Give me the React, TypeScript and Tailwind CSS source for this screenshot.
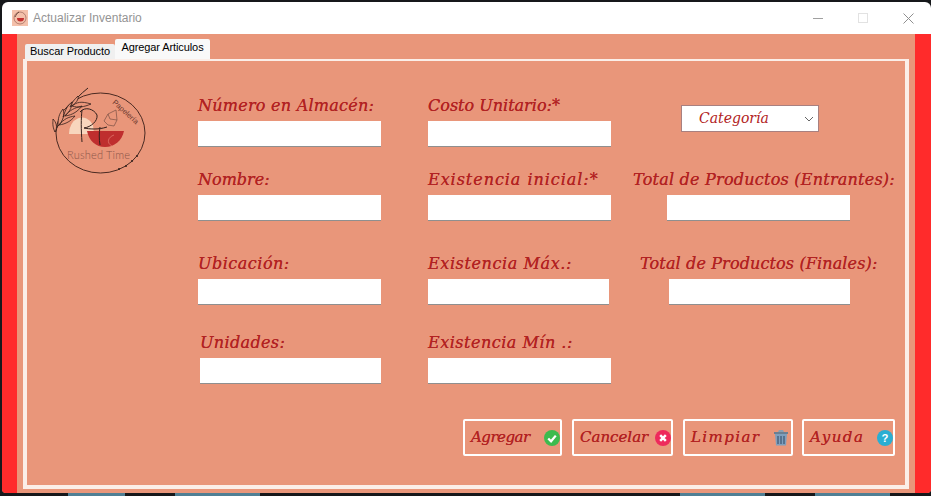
import { ReactNode } from "react";

const script = "font-['DejaVu_Serif',serif] italic text-[#b22222] [text-shadow:0_0_0.6px_#b22222]";

function Logo() {
  return (
    <svg width="100" height="92" viewBox="0 0 100 92" fill="none" className="ml-[23px] mt-[-11px]">
      <ellipse cx="50.500" cy="48" rx="44.500" ry="40" stroke="#4a2a22" strokeWidth="1" />
      <path d="M19 49a13 16 0 0 1 24-9l1 9z" fill="#f8d6bd" />
      <path d="M37 46h37c-2 10-10 16-19 16s-16-6-18-16z" fill="#bf2e2e" />
      <path d="M62 61c-6-3-4-9 2-11" stroke="#e0736a" strokeWidth="0.8" />
      <path d="M32 57c-1-12-1-24 0-32M30 27c5-6 14-3 17 3 1 6-6 12-13 13 5 1 14 2 23-1M50 42c-1 6-1 12 0 18" stroke="#33201c" strokeWidth="1" />
      <path d="M5 47c8-18 18-32 33-44" stroke="#33201c" strokeWidth="1" />
      <path d="M5 47c-3-6-2-10-2-13 3 3 5 8 2 13zM8 41c0-8 1-12 5-17 2 6 0 12-5 17zM13 32c3-8 4-11 9-15 0 6-3 11-9 15zM20 22c2-5 4-7 8-11 1 3-2 8-8 11zM9 40c5-6 9-8 16-9-4 5-9 8-16 9zM15 31c5-6 9-8 17-10-4 5-9 9-17 10zM22 21c5-4 9-5 19-2-7 3-13 4-19 2z" stroke="#33201c" strokeWidth="0.8" fill="#e9967a" />
      <path d="M54 36l4-7 8-4 1 10-3 6-6-1zM58 29l2 5 7 1" stroke="#7a5045" strokeWidth="0.7" />
      <text x="62" y="18" fontSize="7.500" fill="#6f3b30" fontFamily="Liberation Sans, sans-serif" transform="rotate(42 62 18)">Papelería</text>
      <text x="17" y="74" fontSize="11" fill="#8a5549" fontFamily="Lato, sans-serif" fontWeight="300" letterSpacing="0.2">Rushed Time</text>
      <circle cx="87" cy="71" r="1" fill="#33201c" />
      <circle cx="82" cy="76" r="1" fill="#33201c" />
      <circle cx="76" cy="81" r="1" fill="#33201c" />
      <circle cx="69" cy="84" r="1" fill="#33201c" />
    </svg>
  );
}

function Field({ label, className = "", inputClass = "w-[183px]", labelClass = "" }: { label: string; className?: string; inputClass?: string; labelClass?: string }) {
  return (
    <div className={`flex flex-col ${className}`}>
      <label className={`${script} h-[25px] text-[16px] leading-[20px] whitespace-nowrap ${labelClass}`}>{label}</label>
      <input className={`h-[26px] bg-white border-b border-[#8f8f8f] outline-none ${inputClass}`} />
    </div>
  );
}

function ActionButton({ label, icon, className, textClass }: { label: string; icon: ReactNode; className: string; textClass: string }) {
  return (
    <button className={`h-[37px] flex items-center justify-between border-2 border-white rounded-[2px] pl-[6px] ${className}`}>
      <span className={`${script} text-[15px] ${textClass}`}>{label}</span>
      {icon}
    </button>
  );
}

const CheckIcon = (
  <svg width="16" height="16" viewBox="0 0 17 17">
    <circle cx="8.500" cy="8.500" r="8.500" fill="#3dbb4e" />
    <path d="M4.500 9l3 3 5-6" stroke="#fff" strokeWidth="2.400" fill="none" />
  </svg>
);
const CloseIcon = (
  <svg width="16" height="16" viewBox="0 0 17 17">
    <circle cx="8.500" cy="8.500" r="8.500" fill="#ee2a5c" />
    <path d="M5.500 5.500l6 6M11.500 5.500l-6 6" stroke="#fff" strokeWidth="2.600" />
  </svg>
);
const TrashIcon = (
  <svg width="14" height="17" viewBox="0 0 14 17">
    <path d="M0 3h14v2H0z" fill="#6b7f92" />
    <path d="M4 3l1-2h4l1 2z" fill="#8aa0b3" />
    <path d="M1 5h12l-1 11.500H2z" fill="#7f9fbd" />
    <path d="M4 7v8M7 7v8M10 7v8" stroke="#2f4560" strokeWidth="1" />
  </svg>
);
const HelpIcon = (
  <svg width="16" height="16" viewBox="0 0 17 17">
    <circle cx="8.500" cy="8.500" r="8.500" fill="#2aaed2" />
    <text x="8.500" y="13" textAnchor="middle" fontSize="12" fontWeight="700" fill="#fff" fontFamily="Liberation Sans, sans-serif">?</text>
  </svg>
);

export default function App() {
  return (
    <div className="w-[931px] h-[496px] bg-[#16181b] overflow-hidden pt-[2px] pl-[2px]">
      <div className="h-[491px] w-[929px] flex flex-col rounded-t-[6px] rounded-b-[4px] overflow-hidden">
        <div className="h-[32px] shrink-0 bg-white flex items-center pl-[10px]">
          <svg width="16" height="16" viewBox="0 0 16 16" fill="none" className="mr-[5px]">
            <rect width="16" height="16" fill="#f4c0aa" />
            <circle cx="8" cy="8" r="6" stroke="#8a5549" strokeWidth="0.6" />
            <path d="M5 8h7a3.500 3.500 0 0 1-7 0z" fill="#c22f2f" />
            <path d="M3 7c1-2 2-4 4-5" stroke="#4a2a22" strokeWidth="0.8" />
          </svg>
          <span className="font-['Liberation_Sans',sans-serif] text-[12px] text-[#949494]">Actualizar Inventario</span>
          <div className="ml-auto flex items-center">
            <div className="w-[10px] h-px bg-[#a0a0a0] mr-[35px]" />
            <div className="w-[10px] h-[10px] border border-[#e2e2e2] mr-[35px]" />
            <svg width="11" height="11" viewBox="0 0 11 11" className="mr-[17px]"><path d="M.5.5l10 10M10.500.5l-10 10" stroke="#8f8f8f" strokeWidth="1" /></svg>
          </div>
        </div>
        <div className="flex-1 flex flex-col bg-[#e9967a] border-l-[15px] border-r-[16px] border-[#ff2b2b] pl-[6px] pr-[6px] pb-[4px]">
          <div className="h-[25px] flex items-end font-['Liberation_Sans',sans-serif] text-[11px] tracking-[-0.1px] text-black pl-[2px]">
            <div className="h-[15px] w-[90px] bg-[#f0f0f0] flex items-center justify-center rounded-t-[2px]">Buscar Producto</div>
            <div className="h-[20px] w-[95px] bg-[#f9f9f9] flex items-center justify-center rounded-t-[2px] pb-[3px]">Agregar Articulos</div>
          </div>
          <div className="flex-1 border-[4px] border-t-2 border-[#fbeee8] flex flex-col">
            <div className="grid grid-cols-[171px_230px_200px_1fr] grid-rows-[74px_84px_79px_78px] mt-[35px]">
              <div><Logo /></div>
              <Field label="Número en Almacén:" labelClass="tracking-[0.25px]" />
              <Field label="Costo Unitario:*" />
              <div className="pt-[9px] pl-[53px]">
                <button className="w-[138px] h-[27px] bg-white border border-[#a88080] flex items-center justify-between pl-[17px] pr-[4px]">
                  <span className={`${script} text-[14px] [text-shadow:none]`}>Categoría</span>
                  <svg width="10" height="6" viewBox="0 0 10 6" fill="none"><path d="M1 1l4 4 4-4" stroke="#666" strokeWidth="1" /></svg>
                </button>
              </div>
              <div />
              <Field label="Nombre:" />
              <Field label="Existencia inicial:*" labelClass="tracking-[0.95px]" />
              <Field label="Total de Productos (Entrantes):" className="pl-[5px]" inputClass="w-[183px] ml-[34px]" labelClass="tracking-[0.23px]" />
              <div />
              <Field label="Ubicación:" labelClass="tracking-[0.5px]" />
              <Field label="Existencia Máx.:" inputClass="w-[181px]" labelClass="tracking-[0.6px]" />
              <Field label="Total de Productos (Finales):" className="pl-[12px]" inputClass="w-[181px] ml-[29px]" labelClass="tracking-[0.13px]" />
              <div />
              <Field label="Unidades:" className="ml-[2px]" inputClass="w-[181px]" labelClass="tracking-[0.35px]" />
              <Field label="Existencia Mín .:" labelClass="tracking-[0.5px]" />
            </div>
            <div className="mt-[8px] mr-[10px] flex justify-end">
              <ActionButton label="Agregar" icon={CheckIcon} className="w-[99px] mr-[10px]" textClass="tracking-[-0.5px]" />
              <ActionButton label="Cancelar" icon={CloseIcon} className="w-[101px] mr-[10px]" textClass="" />
              <ActionButton label="Limpiar" icon={TrashIcon} className="w-[110px] mr-[9px] pr-[3px]" textClass="tracking-[1.4px]" />
              <ActionButton label="Ayuda" icon={HelpIcon} className="w-[93px]" textClass="tracking-[1.500px]" />
            </div>
          </div>
        </div>
      </div>
      <div className="h-[3px] flex -ml-[2px]">
        <div className="w-[68px]" />
        <div className="w-[57px] bg-[#4f7f94]" />
        <div className="w-[50px]" />
        <div className="w-[85px] bg-[#4f7f94]" />
        <div className="w-[420px]" />
        <div className="w-[85px] bg-[#4f7f94]" />
        <div className="w-[50px]" />
        <div className="w-[75px] bg-[#4f7f94]" />
      </div>
    </div>
  );
}
